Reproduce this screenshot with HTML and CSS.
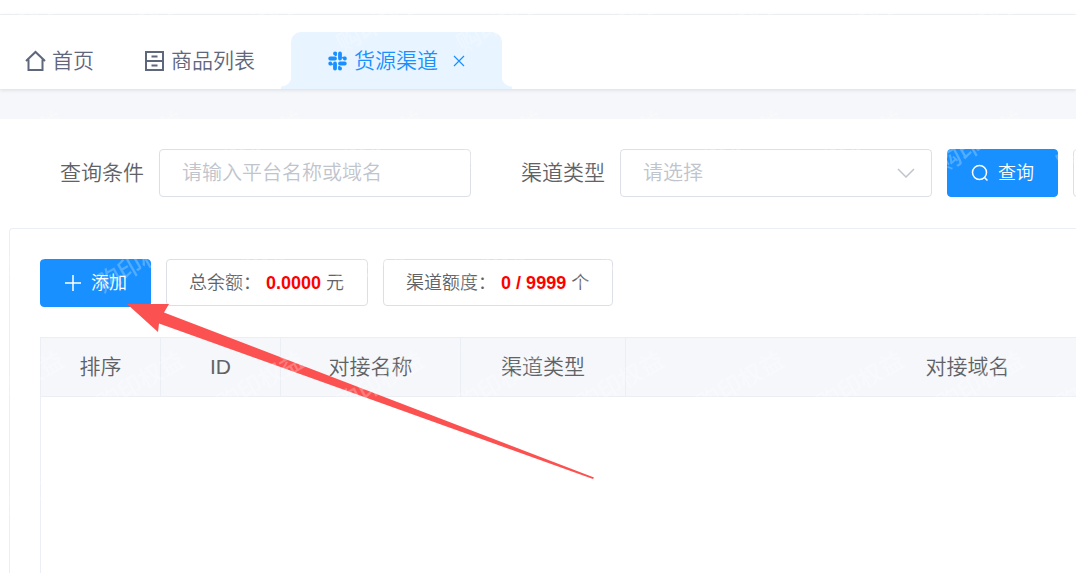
FILE: index.html
```html
<!DOCTYPE html>
<html lang="zh-CN">
<head>
  <meta charset="UTF-8">
  <meta name="viewport" content="width=device-width, initial-scale=1">
  <title>货源渠道</title>
  <link rel="stylesheet" href="styles.css">
</head>
<body>
  <div class="topbar"></div>

  <nav class="tabs">
    <a class="tab" href="#home">
      <svg class="icon-home" viewBox="0 0 21 21" fill="none" stroke="currentColor" stroke-width="2"><path d="M1 11 10.5 2 20 11M3.500 9.500V20h14V9.500"/></svg>
      <span>首页</span>
    </a>
    <a class="tab tab-goods" href="#goods">
      <svg class="icon-tab" viewBox="0 0 19 20" fill="none" stroke="currentColor" stroke-width="2"><path d="M1 1h17v18H1zM1 10h17M6.500 5.500h6M6.500 14.500h6"/></svg>
      <span>商品列表</span>
    </a>
    <div class="tab active">
      <svg class="icon-tab" viewBox="0 0 19 20" fill="none" stroke="currentColor" stroke-width="3.800" stroke-linecap="round">
        <path d="M7 2.500h.1M12 2.500v5M2.200 7.500H7M16.800 7.500h.1M2.200 12.500h.1M12 12.500h4.800M7 12.500v5M12 17.500h.1"/>
        <path stroke-width="2" d="M7.800 2v2.200M2 13.200h2M15 6.800h2M11.200 15.800v2"/>
      </svg>
      <a href="#channel">货源渠道</a>
      <button class="close" type="button" aria-label="关闭">
        <svg viewBox="0 0 12 12" fill="none" stroke="currentColor" stroke-width="1.200"><path d="M1 1l10 10M11 1 1 11"/></svg>
      </button>
    </div>
  </nav>

  <main class="main">
    <form class="search">
      <div class="field">
        <label for="keyword">查询条件</label>
        <input type="text" id="keyword" placeholder="请输入平台名称或域名">
      </div>
      <div class="field">
        <label for="type">渠道类型</label>
        <div class="select">
          <select id="type">
            <option value="">请选择</option>
          </select>
          <svg viewBox="0 0 18 10" fill="none" stroke="currentColor" stroke-width="1.500"><path d="M1 1l8 8 8-8"/></svg>
        </div>
      </div>
      <div class="buttons">
        <button class="btn primary" type="button">
          <svg viewBox="0 0 18 18" fill="none" stroke="currentColor" stroke-width="1.500"><circle cx="8.500" cy="8.500" r="7"/><path d="M13.500 13.500l3 3"/></svg>
          <span>查询</span>
        </button>
        <button class="btn" type="reset" aria-label="重置"></button>
      </div>
    </form>

    <section class="card">
      <div class="toolbar">
        <button class="btn primary" type="button">
          <svg viewBox="0 0 18 18" fill="none" stroke="currentColor" stroke-width="1.500"><path d="M1 9h16M9 1v16"/></svg>
          <span>添加</span>
        </button>
        <div class="stat">总余额： <b>0.0000</b> 元</div>
        <div class="stat">渠道额度： <b>0 / 9999</b> 个</div>
      </div>

      <div class="table-wrap">
        <table>
          <colgroup>
            <col class="col-sm">
            <col class="col-sm">
            <col class="col-name">
            <col class="col-type">
            <col>
          </colgroup>
          <thead>
            <tr>
              <th>排序</th>
              <th>ID</th>
              <th>对接名称</th>
              <th>渠道类型</th>
              <th>对接域名</th>
            </tr>
          </thead>
        </table>
      </div>
    </section>
  </main>

  <!-- guide arrow -->
  <svg class="arrow" viewBox="0 0 467 175" aria-hidden="true"><path fill="#fc5151" d="M0 0 42 0 37 8.500 467 173.500 466 175 32 19.500 31 28z"/></svg>

  <!-- watermark -->
  <svg class="watermark" aria-hidden="true">
    <defs>
      <pattern id="mark" x="90" y="90" width="120" height="120" patternUnits="userSpaceOnUse">
        <text x="13" y="83" transform="rotate(-30 13 83)">购印权益</text>
      </pattern>
    </defs>
    <rect width="100%" height="100%" fill="url(#mark)"/>
  </svg>
</body>
</html>
```

FILE: styles.css
```css
* { box-sizing: border-box; }
body {
  position: relative;
  display: flex;
  flex-direction: column;
  min-height: 100vh;
  margin: 0;
  overflow: hidden;
  background: #f5f7fa;
  color: #606266;
  font: 350 21px/30px "Liberation Sans", "Noto Sans CJK SC", sans-serif;
}
button, input, select { font: inherit; }
a { color: inherit; text-decoration: none; }
svg { display: block; flex: none; }

.topbar { height: 15px; background: #fff; border-bottom: 1px solid #f3f4f6; }

/* tabs */
.tabs {
  display: flex;
  padding: 17px 0 0;
  background: #fff;
  box-shadow: 0 1px 4px rgba(0, 21, 41, .12);
}
.tab {
  display: flex;
  align-items: center;
  gap: 6px;
  height: 57px;
  padding: 0 25px;
  color: #5f677c;
}
.tab-goods { gap: 7px; margin-left: 1px; }
.tab.active {
  position: relative;
  gap: 7px;
  margin: 0 11px;
  padding: 0 37px;
  border-radius: 10px 10px 0 0;
  background: #e8f4ff;
  color: #1890ff;
}
.tab.active::before, .tab.active::after {
  content: "";
  position: absolute;
  bottom: 0;
  width: 10px;
  height: 13px;
}
.tab.active::before { right: 100%; background: radial-gradient(circle at 0 0, transparent 10px, #e8f4ff 11px); }
.tab.active::after { left: 100%; background: radial-gradient(circle at 100% 0, transparent 10px, #e8f4ff 11px); }
.icon-home { width: 21px; height: 21px; }
.icon-tab { width: 19px; height: 20px; }
.close { margin-left: 8px; padding: 0; border: 0; background: none; color: inherit; }
.close svg { width: 12px; height: 12px; }

.main {
  display: flex;
  flex: 1;
  flex-direction: column;
  margin-top: 30px;
  padding: 30px 0 0 9px;
  background: #fff;
}

/* search form */
.search { display: flex; margin: 0 -108px 31px 0; padding-left: 51px; }
.field { display: flex; flex: 1; align-items: center; gap: 15px; min-width: 0; }
.field + .field { margin-left: 50px; }
.field label { flex: none; }
.field input, .field select {
  width: 100%;
  min-width: 0;
  height: 48px;
  padding: 0 22px;
  border: 1px solid #dcdfe6;
  border-radius: 4px;
  background: #fff;
  color: #c0c4cc;
  font-size: 20px;
}
.field input { flex: 1; }
.field input::placeholder { color: #c0c4cc; }
.select { position: relative; flex: 1; }
.select select { display: block; appearance: none; }
.select svg { position: absolute; top: 19px; right: 17px; width: 18px; height: 10px; color: #c0c4cc; pointer-events: none; }
.buttons { display: flex; gap: 15px; margin-left: 15px; }

.btn {
  display: flex;
  align-items: center;
  justify-content: center;
  gap: 9px;
  width: 111px;
  height: 48px;
  padding: 0;
  border: 1px solid #dcdfe6;
  border-radius: 4px;
  background: #fff;
  color: #606266;
  font-size: 18px;
}
.btn.primary { border-color: #1890ff; background: #1890ff; color: #fff; }
.btn svg { width: 18px; height: 18px; }

/* list */
.card {
  display: flex;
  flex: 1;
  flex-direction: column;
  padding: 30px 0 0 30px;
  border: 1px solid #ebeef5;
  border-width: 1px 0 0 1px;
  border-radius: 4px 0 0 0;
}
.toolbar { display: flex; gap: 15px; margin-bottom: 30px; }
.stat {
  height: 47px;
  padding: 0 23px 0 22px;
  border: 1px solid #dcdfe6;
  border-radius: 4px;
  font-size: 18px;
  line-height: 47px;
  white-space: nowrap;
}
.stat b { color: #f00; font-weight: 700; }

.table-wrap { flex: 1; overflow: hidden; border: 1px solid #ebeef5; border-width: 1px 0 0 1px; }
table { width: calc(100% + 234px); table-layout: fixed; border-collapse: separate; border-spacing: 0; }
.col-sm { width: 120px; }
.col-name { width: 180px; }
.col-type { width: 165px; }
th {
  height: 59px;
  padding: 0;
  border: 1px solid #ebeef5;
  border-width: 0 1px 1px 0;
  background: #f5f7fb;
  font-weight: 350;
}

.arrow { position: absolute; top: 304px; left: 127px; width: 467px; height: 175px; pointer-events: none; }
.watermark { position: absolute; top: 0; left: 0; width: 100%; height: 100%; pointer-events: none; }
.watermark text { fill: #fff; fill-opacity: .25; font-size: 24px; font-weight: 500; }
```
